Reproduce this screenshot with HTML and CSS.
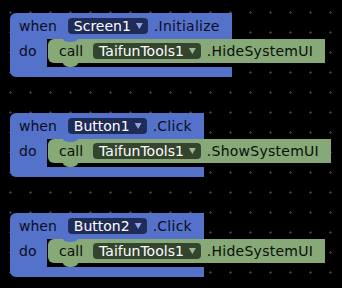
FILE: index.html
```html
<!DOCTYPE html>
<html lang="en">
<head>
    <meta charset="UTF-8">
    <meta name="viewport" content="width=device-width, initial-scale=1.0">
    <title>Blocks</title>
    <link rel="stylesheet" href="styles.css">
</head>
<body>
    <!-- Rejilla del area de trabajo -->
    <svg class="grid" width="342" height="288">
        <defs>
            <pattern id="dots" width="20" height="20" patternUnits="userSpaceOnUse">
                <rect x="9" y="12" width="3" height="1" fill="#3c3c3c"/>
                <rect x="10" y="11" width="1" height="3" fill="#3c3c3c"/>
            </pattern>
        </defs>
        <rect width="100%" height="100%" fill="url(#dots)"/>
    </svg>

    <div class="workspace">
        <!-- when Screen1.Initialize -->
        <div class="event">
            <div class="event-head">
                <span class="label">when</span>
                <span class="dropdown">Screen1<i class="arrow"></i></span>
                <span class="label method">.Initialize</span>
            </div>
            <div class="event-body">
                <div class="event-do">do</div>
                <div class="slot">
                    <div class="call">
                        <span class="label">call</span>
                        <span class="dropdown">TaifunTools1<i class="arrow"></i></span>
                        <span class="label method">.HideSystemUI</span>
                    </div>
                </div>
            </div>
            <div class="event-foot"></div>
        </div>

        <!-- when Button1.Click -->
        <div class="event">
            <div class="event-head">
                <span class="label">when</span>
                <span class="dropdown">Button1<i class="arrow"></i></span>
                <span class="label method">.Click</span>
            </div>
            <div class="event-body">
                <div class="event-do">do</div>
                <div class="slot">
                    <div class="call">
                        <span class="label">call</span>
                        <span class="dropdown">TaifunTools1<i class="arrow"></i></span>
                        <span class="label method">.ShowSystemUI</span>
                    </div>
                </div>
            </div>
            <div class="event-foot"></div>
        </div>

        <!-- when Button2.Click -->
        <div class="event">
            <div class="event-head">
                <span class="label">when</span>
                <span class="dropdown">Button2<i class="arrow"></i></span>
                <span class="label method">.Click</span>
            </div>
            <div class="event-body">
                <div class="event-do">do</div>
                <div class="slot">
                    <div class="call">
                        <span class="label">call</span>
                        <span class="dropdown">TaifunTools1<i class="arrow"></i></span>
                        <span class="label method">.HideSystemUI</span>
                    </div>
                </div>
            </div>
            <div class="event-foot"></div>
        </div>
    </div>
</body>
</html>
```

FILE: styles.css
```css
* {
    box-sizing: border-box;
}
body {
    margin: 0;
    background: #000;
    font-family: "DejaVu Sans", sans-serif;
    font-size: 14px;
    overflow: hidden;
}
.grid {
    position: absolute;
    left: 0;
    top: 0;
}
.workspace {
    position: relative;
    display: flex;
    flex-direction: column;
    align-items: flex-start;
    gap: 36px;
    padding: 13px 0 0 10px;
}
.event {
    display: flex;
    flex-direction: column;
    color: #0b0d1e;
}
.event-head {
    display: flex;
    align-items: center;
    height: 26px;
    padding: 0 12px 0 9px;
    background: #5572cb;
    border-radius: 6px 0 0 0;
    white-space: nowrap;
}
.event-head .dropdown {
    margin: 0 6px 0 11px;
    background: #1f2c58;
}
.method {
    letter-spacing: 0.25px;
}
.event-body {
    display: flex;
    height: 28px;
}
.event-do {
    width: 37px;
    padding-left: 9px;
    line-height: 24px;
    background: #5572cb;
}
.slot {
    width: 0;
    flex-grow: 1;
    padding-left: 1px;
}
.call {
    position: relative;
    display: flex;
    align-items: center;
    width: max-content;
    height: 24px;
    padding: 0 12px 0 11px;
    background: #86a977;
    border-radius: 6px 0 0 6px;
    color: #0a0f08;
    white-space: nowrap;
}
/* muesca de arriba y pestaña de abajo */
.call::before {
    content: "";
    position: absolute;
    left: 15px;
    top: 0;
    width: 15px;
    height: 3px;
    background: #5572cb;
    border-radius: 0 0 7px 7px / 0 0 3px 3px;
}
.call::after {
    content: "";
    position: absolute;
    left: 15px;
    top: 100%;
    width: 15px;
    height: 4px;
    background: #86a977;
    border-radius: 0 0 7px 7px / 0 0 4px 4px;
}
.call .dropdown {
    margin: 0 6px 0 10px;
    background: #34452f;
}
.event-foot {
    height: 10px;
    background: #5572cb;
    border-radius: 0 0 0 6px;
}
.dropdown {
    display: flex;
    align-items: center;
    height: 16px;
    padding: 0 5px 0 6px;
    border-radius: 4px;
    color: #fff;
    line-height: 16px;
}
.arrow {
    width: 7px;
    height: 6px;
    margin-left: 5px;
    clip-path: polygon(0 0, 100% 0, 50% 100%);
}
.event-head .arrow {
    background: #8ba4e4;
}
.call .arrow {
    background: #9dba90;
}
```
